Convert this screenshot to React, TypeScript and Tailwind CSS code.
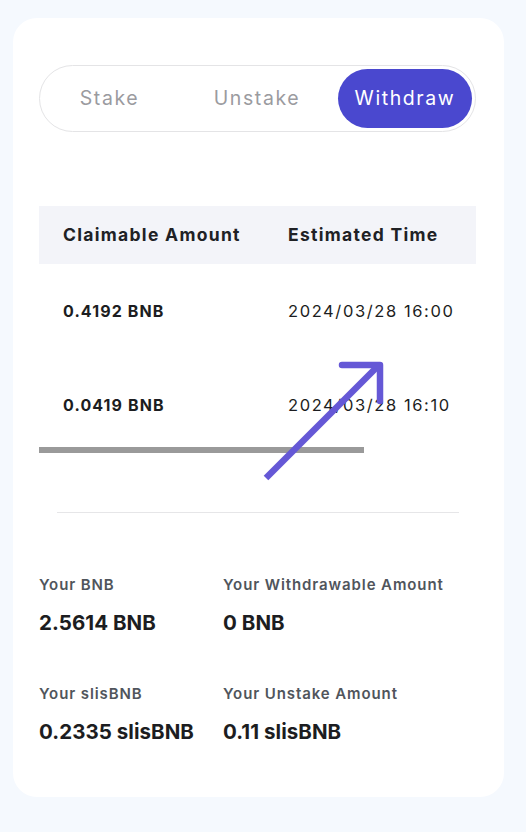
import React from "react";

const font = { fontFamily: "Inter, 'Noto Sans', sans-serif" };

function Stat({ label, value }: { label: string; value: string }) {
  return (
    <div className="flex flex-col">
      <div className="h-[20px] text-[15px] leading-[20px] font-semibold text-[#50555c] tracking-[0.9px] whitespace-nowrap">{label}</div>
      <div className="mt-[14px] h-[28px] text-[20.5px] leading-[28px] font-bold text-[#1c1d21] tracking-[0.05px] whitespace-nowrap">{value}</div>
    </div>
  );
}

export default function App() {
  return (
    <div className="min-h-[832px] w-[526px] bg-[#f5f9fe] pt-[18px] pl-[13px]" style={font}>
      <div className="relative w-[491px] h-[779px] rounded-[24px] bg-white pt-[47px] pl-[26px] pr-[28px]">
        {/* Tabs */}
        <div className="flex h-[67px] w-[437px] items-center rounded-full border border-[#e4e4e6] px-[3px]">
          <div className="flex h-[59px] w-[133px] items-center justify-center text-[19.5px] tracking-[1.6px] text-[#9b9b9f]">Stake</div>
          <div className="flex h-[59px] w-[162px] items-center justify-center text-[19.5px] tracking-[1.6px] text-[#9b9b9f]">Unstake</div>
          <div className="flex h-[59px] w-[134px] items-center justify-center rounded-full bg-[#4a48cf] text-[19.5px] tracking-[1.6px] text-white">Withdraw</div>
        </div>

        {/* Table */}
        <div className="mt-[74px] w-[437px]">
          <div className="flex h-[58px] items-center bg-[#f3f4f9] pl-[24px] text-[17.5px] font-bold text-[#202125] tracking-[1.3px]">
            <div className="w-[225px] whitespace-nowrap">Claimable Amount</div>
            <div className="whitespace-nowrap">Estimated Time</div>
          </div>
          <div className="flex h-[94px] items-center pl-[24px] text-[16px] text-[#1c1d21]">
            <div className="w-[225px] font-bold tracking-[1.1px]">0.4192 BNB</div>
            <div className="text-[16.5px] tracking-[1.6px] whitespace-nowrap">2024/03/28 16:00</div>
          </div>
          <div className="flex h-[94px] items-center pl-[24px] text-[16px] text-[#1c1d21]">
            <div className="w-[225px] font-bold tracking-[1.1px]">0.0419 BNB</div>
            <div className="text-[16.5px] tracking-[1.6px] whitespace-nowrap">2024/03/28 16:10</div>
          </div>
          <div className="-mt-[5px] h-[6px] w-[325px] bg-[#9a9a9a]" />
        </div>

        {/* Divider */}
        <div className="ml-[18px] mt-[59px] h-px w-[402px] bg-[#e6e6e8]" />

        {/* Stats */}
        <div className="mt-[62px] grid grid-cols-[184px_1fr] gap-y-[47px]">
          <Stat label="Your BNB" value="2.5614 BNB" />
          <Stat label="Your Withdrawable Amount" value="0 BNB" />
          <Stat label="Your slisBNB" value="0.2335 slisBNB" />
          <Stat label="Your Unstake Amount" value="0.11 slisBNB" />
        </div>

        {/* Annotation arrow */}
        <svg className="pointer-events-none absolute left-[240px] top-[320px]" width="160" height="160" viewBox="0 0 160 160">
          <g stroke="#6558d6" strokeWidth="6.5" strokeLinecap="round" strokeLinejoin="round" fill="none">
            <line x1="13" y1="140" x2="126" y2="27" strokeLinecap="butt" />
            <polyline points="89,27 127,27 127,63" />
          </g>
        </svg>
      </div>
    </div>
  );
}
